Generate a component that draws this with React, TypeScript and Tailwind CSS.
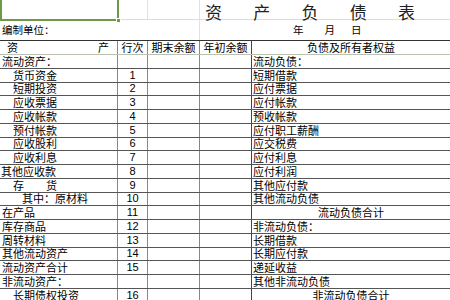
import React from "react";

type Row = { l: string; pl: number; n: string; r: string; rc?: boolean };

const rows: Row[] = [
  { l: "流动资产：", pl: 2, n: "", r: "流动负债：" },
  { l: "货币资金", pl: 13, n: "1", r: "短期借款" },
  { l: "短期投资", pl: 13, n: "2", r: "应付票据" },
  { l: "应收票据", pl: 13, n: "3", r: "应付帐款" },
  { l: "应收帐款", pl: 13, n: "4", r: "预收帐款" },
  { l: "预付帐款", pl: 13, n: "5", r: "应付职工薪酬" },
  { l: "应收股利", pl: 13, n: "6", r: "应交税费" },
  { l: "应收利息", pl: 13, n: "7", r: "应付利息" },
  { l: "其他应收款", pl: 1, n: "8", r: "应付利润" },
  { l: "存\u3000\u3000货", pl: 13, n: "9", r: "其他应付款" },
  { l: "其中：原材料", pl: 22, n: "10", r: "其他流动负债" },
  { l: "在产品", pl: 2, n: "11", r: "流动负债合计", rc: true },
  { l: "库存商品", pl: 2, n: "12", r: "非流动负债：" },
  { l: "周转材料", pl: 2, n: "13", r: "长期借款" },
  { l: "其他流动资产", pl: 2, n: "14", r: "长期应付款" },
  { l: "流动资产合计", pl: 2, n: "15", r: "递延收益" },
  { l: "非流动资产：", pl: 2, n: "", r: "其他非流动负债" },
  { l: "长期债权投资", pl: 13, n: "16", r: "非流动负债合计", rc: true },
];

export default function App() {
  return (
    <div className="w-[450px] h-[300px] overflow-hidden bg-white text-black font-['Noto_Sans_CJK_SC',sans-serif] text-[11px] leading-none">
      {/* Row 1: title */}
      <div className="flex h-[20px] border-b border-[#dcdcdc]">
        <div className="relative w-[119px] h-[21px] border-l-2 border-r-2 border-b-2 border-[#6f9a45] shrink-0">
          <div className="absolute right-[-4px] bottom-[-4px] w-[5px] h-[5px] bg-[#6f9a45] border border-white"></div>
        </div>
        <div className="w-[29px] border-r border-[#e2e2e2] shrink-0"></div>
        <div className="w-[52px] border-r border-[#e2e2e2] shrink-0"></div>
        <div className="flex-1 flex items-center pl-[5px] pt-[3px]">
          <div className="flex w-[210px] justify-between text-[17px] leading-[17px] text-[#222]">
            <span>资</span>
            <span>产</span>
            <span>负</span>
            <span>债</span>
            <span>表</span>
          </div>
        </div>
      </div>
      {/* Row 2 */}
      <div className="flex h-[21px] border-b border-[#333]">
        <div className="w-[148px] shrink-0 flex items-center pl-[2px] text-[10.5px] pt-[1px]">编制单位：</div>
        <div className="w-[52px] border-r border-[#e2e2e2] shrink-0"></div>
        <div className="flex-1 flex items-center text-[10.5px] pt-[1px]">
          <span className="ml-[93px]">年</span>
          <span className="ml-[21px]">月</span>
          <span className="ml-[16px]">日</span>
        </div>
      </div>
      {/* Header */}
      <div className="flex h-[14px] border-b border-[#b8c2ae]">
        <div className="w-[118px] shrink-0 border-r border-[#888] flex items-center justify-between pl-[7px] pr-[8px]">
          <span>资</span>
          <span>产</span>
        </div>
        <div className="w-[30px] shrink-0 border-r border-[#888] flex items-center justify-center">行次</div>
        <div className="w-[52px] shrink-0 border-r border-[#888] flex items-center justify-center">期末余额</div>
        <div className="w-[52px] shrink-0 border-r border-[#444] flex items-center justify-center">年初余额</div>
        <div className="flex-1 flex items-center justify-center">负债及所有者权益</div>
      </div>
      {rows.map((r, i) => (
        <div key={i} className="flex h-[13.75px] border-b border-[#555]">
          <div
            className="w-[118px] shrink-0 border-r border-[#888] flex items-center whitespace-nowrap"
            style={{ paddingLeft: r.pl }}
          >
            {r.l}
          </div>
          <div className="w-[30px] shrink-0 border-r border-[#888] flex items-center justify-center font-['Liberation_Sans',sans-serif] text-[11px]">
            {r.n}
          </div>
          <div className="w-[52px] shrink-0 border-r border-[#888]"></div>
          <div className="w-[52px] shrink-0 border-r border-[#444]"></div>
          <div className={"flex-1 flex items-center whitespace-nowrap " + (r.rc ? "justify-center" : "pl-[1px]")}>
            {r.r}
          </div>
        </div>
      ))}
    </div>
  );
}
